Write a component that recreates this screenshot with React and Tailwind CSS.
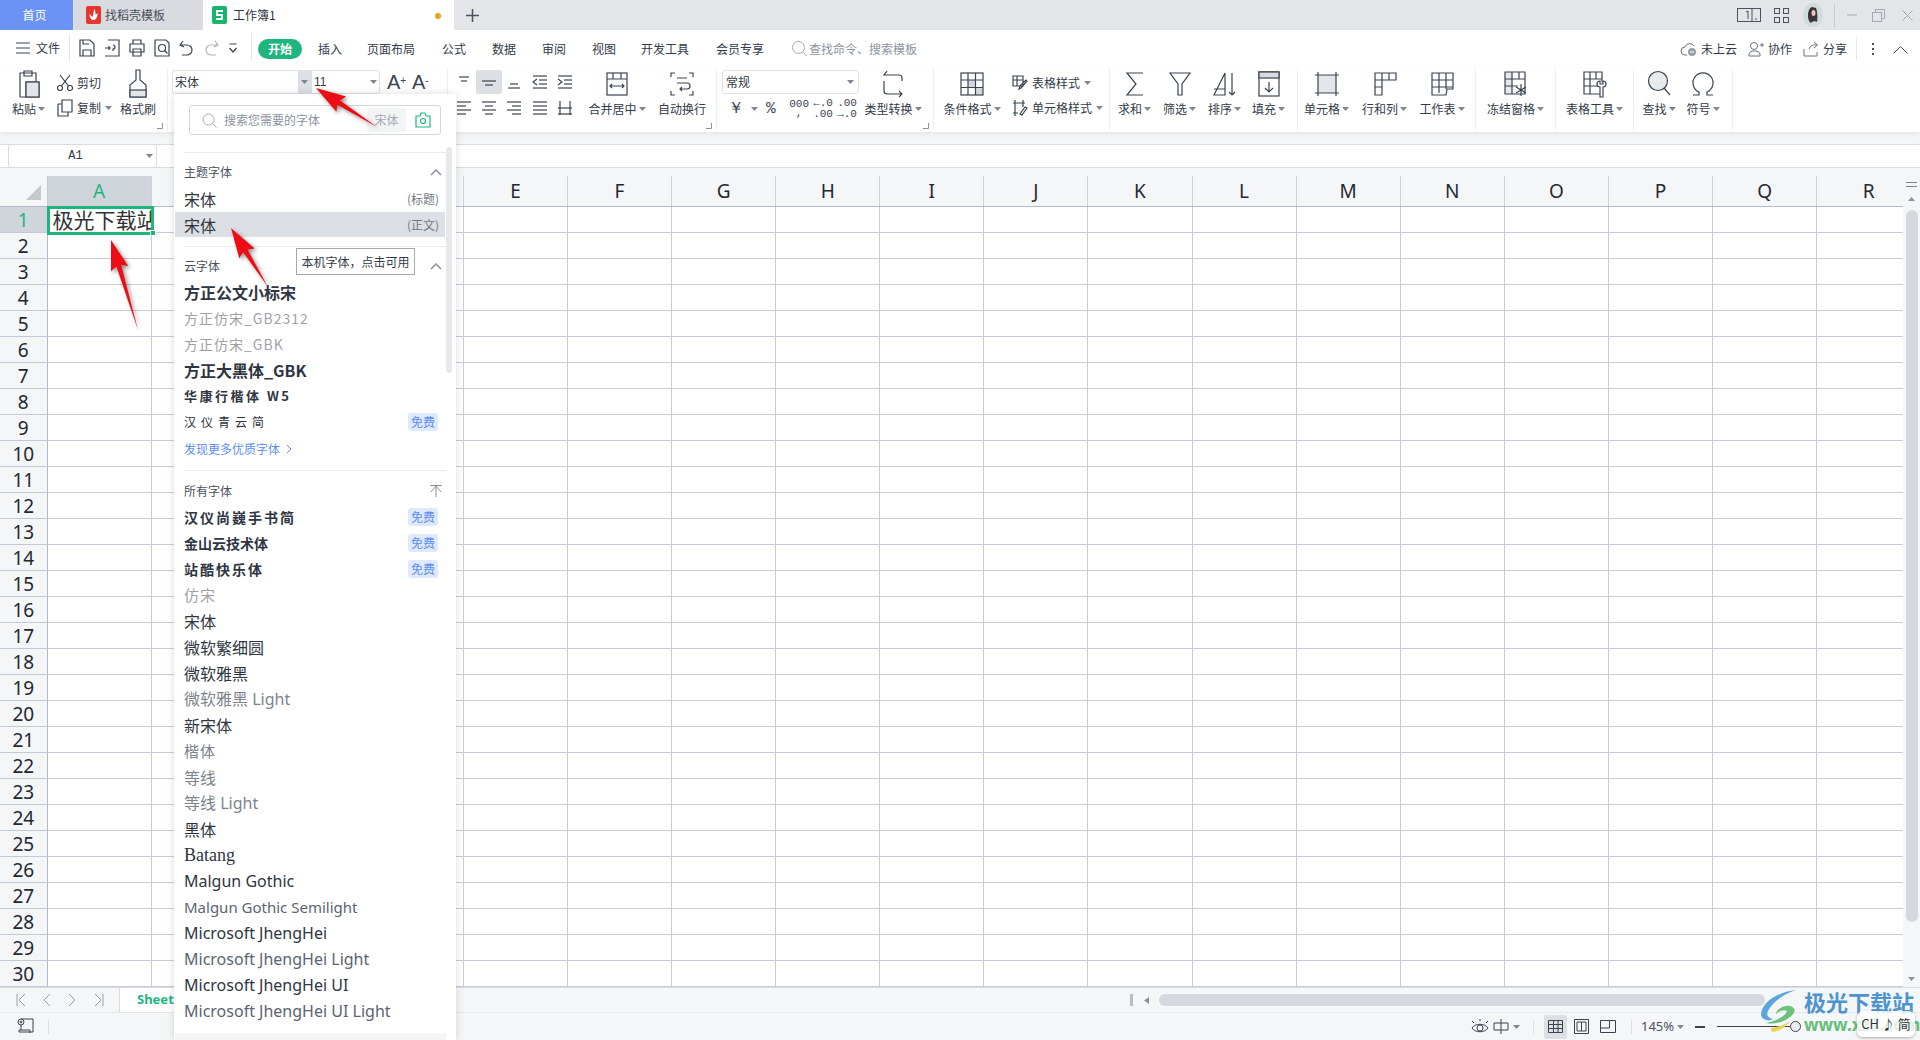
import React from 'react';

const FONT = '"Noto Sans CJK SC", "Noto Sans", sans-serif';
const COLS = 'ABCDEFGHIJKLMNOPQR'.split('');
const ROWS = Array.from({ length: 30 }, (_, i) => i + 1);
const INK = '#3b4351';

const Caret = ({ color = '#7f8692' }) => (
  <svg width="7" height="4" viewBox="0 0 7 4" className="shrink-0"><path d="M0 0h7L3.5 4z" fill={color} /></svg>
);

const Ic = ({ w = 24, h = 24, children, className = '' }) => (
  <svg width={w} height={h} viewBox={`0 0 ${w} ${h}`} fill="none" stroke={INK} strokeWidth="1.2" className={`shrink-0 ${className}`}>{children}</svg>
);

const Launcher = () => (
  <svg width="6" height="6" viewBox="0 0 6 6" className="absolute right-[4px] bottom-[3px]"><path d="M5.5 0v5.5H0" fill="none" stroke="#8b919c" /></svg>
);

const Sep = () => <div className="w-px h-[62px] mt-[3px] bg-[#eceef1] shrink-0" />;

const BigBtn = ({ w, label, caret, icon }) => (
  <div className="flex flex-col items-center shrink-0" style={{ width: w }}>
    <div className="h-[30px] mt-[4px] flex items-center justify-center">{icon}</div>
    <div className="mt-[1px] h-[18px] flex items-center gap-[2px] text-[12px] text-[#333a47] whitespace-nowrap">
      {label}{caret && <Caret />}
    </div>
  </div>
);

const SmallBtn = ({ icon, label, caret }) => (
  <div className="h-[25px] flex items-center gap-[4px] text-[12px] text-[#333a47] whitespace-nowrap">
    {icon}{label}{caret && <Caret />}
  </div>
);

const TableIcon = ({ extra }) => (
  <Ic w={30} h={30}>
    {extra}
    <rect x="4" y="4" width="22" height="22" />
    <path d="M4 11h22M4 18.500h22M11 4v22M18.500 4v22" />
  </Ic>
);

const AlignIcon = ({ lines }) => (
  <Ic w={18} h={16}>
    {lines.map((l, i) => <path key={i} d={l} />)}
  </Ic>
);

function TitleBar() {
  return (
    <div className="h-[30px] bg-[#e3e5e9] flex items-stretch shrink-0">
      <div className="w-[73px] bg-[#6b93f6] text-white text-[12px] flex items-center justify-center pr-[4px]">首页</div>
      <div className="w-[129px] ml-px bg-[#d9dbe0] flex items-center text-[12px] text-[#4a505c] pl-[12px] gap-[4px]">
        <svg width="15" height="18" viewBox="0 0 15 18"><rect width="15" height="18" rx="2" fill="#e8352e" /><path d="M3.500 8c0 4 2 6 4 6s4-2 4-7l-2 2c0-2 0-4-1-6-1 2-1 5-2 8-1-1-2-2-3-3z" fill="#fff" /></svg>
        找稻壳模板
      </div>
      <div className="w-[251px] bg-white flex items-center text-[12px] text-[#2d3340] pl-[9px] gap-[6px] relative">
        <svg width="15" height="18" viewBox="0 0 15 18"><rect width="15" height="18" rx="2" fill="#16b56b" /><path d="M11 5H5v4h5v4H4" fill="none" stroke="#fff" strokeWidth="1.8" /></svg>
        工作簿1
        <div className="absolute left-[232px] top-[13px] w-[6px] h-[6px] rounded-full bg-[#e9a21b]" />
      </div>
      <div className="w-[36px] flex items-center justify-center">
        <svg width="13" height="13" viewBox="0 0 13 13"><path d="M6.500 0v13M0 6.500h13" stroke="#4a5160" strokeWidth="1.500" /></svg>
      </div>
      <div className="flex-1" />
      <div className="flex items-center pr-[7px]">
        <svg width="24" height="14" viewBox="0 0 24 14" fill="none" stroke="#4a5160"><rect x=".5" y=".5" width="23" height="13" /><path d="M15 .5v13M9 4l2-1v8M18 11h2" /></svg>
        <svg width="15" height="15" viewBox="0 0 15 15" fill="none" stroke="#4a5160" className="ml-[13px]"><rect x=".5" y=".5" width="5" height="5" /><rect x="9.500" y=".5" width="5" height="5" /><rect x=".5" y="9.500" width="5" height="5" /><rect x="9.500" y="9.500" width="5" height="5" /></svg>
        <svg width="20" height="24" viewBox="0 0 20 24" className="ml-[14px]">
          <ellipse cx="10" cy="12" rx="10" ry="12" fill="#cfdcdc" />
          <path d="M9 4c-3 1-4 5-4 9 0 3 1 6 3 7 1-2 5-2 6-1 1-5 0-12-1-14z" fill="#3d3338" />
          <ellipse cx="10.500" cy="10" rx="2" ry="3" fill="#e9c8b8" />
        </svg>
        <div className="ml-[11px] w-px h-[24px] bg-[#c9ccd2]" />
        <svg width="10" height="2" className="ml-[12px]"><path d="M0 1h10" stroke="#a3a8b1" /></svg>
        <svg width="13" height="13" viewBox="0 0 13 13" fill="none" stroke="#a3a8b1" className="ml-[15px]"><rect x=".5" y="3.500" width="9" height="9" /><path d="M3.500 3.500v-3h9v9h-3" /></svg>
        <svg width="11" height="11" viewBox="0 0 11 11" stroke="#a3a8b1" className="ml-[17px]"><path d="M.5.5l10 10M10.500.5l-10 10" /></svg>
      </div>
    </div>
  );
}

function MenuBar() {
  const tabs = [['插入', 318], ['页面布局', 367], ['公式', 442], ['数据', 492], ['审阅', 542], ['视图', 592], ['开发工具', 641], ['会员专享', 716]];
  return (
    <div className="h-[35px] bg-white flex items-center shrink-0 text-[12px] text-[#333a47] relative">
      <svg width="14" height="12" viewBox="0 0 14 12" className="ml-[16px]"><path d="M0 1h14M0 6h14M0 11h14" stroke={INK} /></svg>
      <span className="ml-[6px]">文件</span>
      <div className="ml-[9px] w-px h-[28px] bg-[#e4e6ea]" />
      <div className="flex items-center gap-[9px] ml-[9px] w-[170px]">
        <Ic w={16} h={18}><path d="M1 1h10l4 4v12H1zM4 17v-6h8v6M4 1v4h6" /></Ic>
        <Ic w={16} h={18}><path d="M4 1h11v16H1M1 9h6M5 7v4M9 6a2 2 0 1 1 0 4v2" /></Ic>
        <Ic w={16} h={18}><path d="M4 5V1h8v4M1 5h14v8H1zM4 10h8v7H4z" /></Ic>
        <Ic w={16} h={18}><path d="M1 1h11l3 3v13H1z" /><circle cx="8" cy="9" r="3.500" /><path d="M10.500 11.500l3 3" /></Ic>
        <Ic w={16} h={18}><path d="M4 2L1 6l4 2M1 6h7a5 5 0 0 1 0 10H3" /></Ic>
        <Ic w={16} h={18} className="opacity-40"><path d="M11 2l3 4-4 2M14 6H7a5 5 0 0 0 0 10h5" /></Ic>
        <Ic w={8} h={18}><path d="M.5 5h7M.5 9l3.500 4 3.500-4" /></Ic>
      </div>
      <div className="absolute left-[251px] top-[3px] w-px h-[28px] bg-[#e4e6ea]" />
      <div className="absolute left-[258px] top-[9px] w-[44px] h-[20px] rounded-full bg-[#1fb67e] text-white font-bold flex items-center justify-center">开始</div>
      {tabs.map(([t, x]) => (
        <span key={t} className="absolute top-[10px]" style={{ left: x }}>{t}</span>
      ))}
      <div className="absolute left-[792px] top-[10px] flex items-center gap-[2px] text-[#8c93a1]">
        <svg width="15" height="16" viewBox="0 0 15 16" fill="none" stroke="#a4aab5"><circle cx="6.500" cy="6.500" r="6" /><path d="M11 11l3.500 4" /></svg>
        查找命令、搜索模板
      </div>
      <div className="absolute left-[1680px] top-[7px] flex items-center">
        <svg width="18" height="16" viewBox="0 0 18 16" fill="none" stroke="#6b7280"><path d="M7 14H5a4 4 0 0 1 0-8 5 5 0 0 1 9-1" /><circle cx="12" cy="11" r="4" fill="#9aa0aa" stroke="none" /><path d="M10 11h4" stroke="#fff" /></svg>
        <span className="ml-[3px]">未上云</span>
        <svg width="16" height="16" viewBox="0 0 16 16" fill="none" stroke="#6b7280" className="ml-[11px]"><circle cx="6" cy="5" r="3.500" /><path d="M1 15v-2a4 4 0 0 1 4-3h3a4 4 0 0 1 4 3v2zM12 4h4M14 2v4" /></svg>
        <span className="ml-[4px]">协作</span>
        <svg width="16" height="16" viewBox="0 0 16 16" fill="none" stroke="#6b7280" className="ml-[11px]"><path d="M1 8v7h13v-4M6 8a7 7 0 0 1 8-4M11 1l3.500 3L11 7" /></svg>
        <span className="ml-[4px]">分享</span>
        <div className="ml-[9px] w-px h-[24px] bg-[#e4e6ea]" />
        <div className="ml-[15px] flex flex-col gap-[3px]">
          <div className="w-[2px] h-[2px] bg-[#4a5160]" /><div className="w-[2px] h-[2px] bg-[#4a5160]" /><div className="w-[2px] h-[2px] bg-[#4a5160]" />
        </div>
        <svg width="15" height="9" viewBox="0 0 15 9" fill="none" stroke="#4a5160" className="ml-[19px]"><path d="M.5 8.500l7-7 7 7" /></svg>
      </div>
    </div>
  );
}

function Ribbon() {
  return (
    <div className="h-[67px] bg-white flex shrink-0 shadow-[0_2px_5px_rgba(0,0,0,0.07)] relative z-10">
      {/* clipboard */}
      <div className="w-[167px] flex relative shrink-0">
        <BigBtn w={57} label="粘贴" caret icon={<Ic w={24} h={30}><path d="M3 4h16v24H3zM7 2h8v5H7zM9 13h13v15H9z" /><rect x="9" y="13" width="13" height="15" fill="#e3e5e8" /></Ic>} />
        <div className="w-[58px] flex flex-col pt-[5px] shrink-0">
          <SmallBtn label="剪切" icon={<Ic w={16} h={18}><circle cx="3" cy="14" r="2.500" /><circle cx="13" cy="14" r="2.500" /><path d="M4.500 12L13 1M11.500 12L3 1" /></Ic>} />
          <SmallBtn label="复制" caret icon={<Ic w={16} h={18}><path d="M5 1h10v12H5z" /><path d="M1 5h4M1 5v12h10v-4" /></Ic>} />
        </div>
        <BigBtn w={46} label="格式刷" icon={<Ic w={20} h={30}><path d="M8 1h4v10l6 5v12H2V16l6-5z" /><rect x="2" y="21" width="16" height="7" fill="#e3e5e8" /></Ic>} />
        <Launcher />
      </div>
      <Sep />
      {/* font */}
      <div className="w-[279px] pl-[4px] pt-[5px] flex items-start shrink-0">
        <div className="w-[139px] h-[24px] border border-[#dfe1e5] border-r-0 rounded-l-[3px] flex items-center justify-between text-[12px] text-[#333a47] pl-[2px]">
          宋体
          <div className="w-[13px] h-full bg-[#dcdfe3] flex items-center justify-center"><Caret /></div>
        </div>
        <div className="w-[69px] h-[24px] border border-[#dfe1e5] rounded-r-[3px] flex items-center justify-between text-[12px] text-[#333a47] pl-[2px] pr-[2px]" style={{ fontFamily: '"Liberation Sans", sans-serif' }}>
          11<Caret />
        </div>
        <div className="ml-[7px] flex items-center gap-[5px] text-[20px] leading-[24px] text-[#3b4351]" style={{ fontFamily: '"Liberation Sans", sans-serif' }}>
          <span className="w-[18px] font-light">A<sup className="text-[10px]">+</sup></span>
          <span className="w-[18px] ml-[2px] font-light">A<sup className="text-[10px]">-</sup></span>
        </div>
      </div>
      <Sep />
      {/* alignment */}
      <div className="w-[268px] pl-[3px] flex relative shrink-0">
        <div className="w-[127px] grid grid-cols-5 grid-rows-[24px_24px] gap-y-[2px] pt-[5px] shrink-0">
          <div className="flex items-center justify-center"><AlignIcon lines={['M4 3h10', 'M6 7h6']} /></div>
          <div className="flex items-center justify-center bg-[#dcdfe3] rounded-[2px]"><AlignIcon lines={['M2 7h14', 'M5 11h8']} /></div>
          <div className="flex items-center justify-center"><AlignIcon lines={['M5 10h8', 'M3 14h12']} /></div>
          <div className="flex items-center justify-center"><AlignIcon lines={['M2 2h14', 'M8 6h8', 'M8 10h8', 'M2 14h14', 'M6 5L2 8l4 3']} /></div>
          <div className="flex items-center justify-center"><AlignIcon lines={['M2 2h14', 'M8 6h8', 'M8 10h8', 'M2 14h14', 'M2 5l4 3-4 3']} /></div>
          <div className="flex items-center justify-center"><AlignIcon lines={['M2 2h14', 'M2 6h9', 'M2 10h14', 'M2 14h9']} /></div>
          <div className="flex items-center justify-center"><AlignIcon lines={['M2 2h14', 'M5 6h8', 'M2 10h14', 'M5 14h8']} /></div>
          <div className="flex items-center justify-center"><AlignIcon lines={['M2 2h14', 'M7 6h9', 'M2 10h14', 'M7 14h9']} /></div>
          <div className="flex items-center justify-center"><AlignIcon lines={['M2 2h14', 'M2 6h14', 'M2 10h14', 'M2 14h14']} /></div>
          <div className="flex items-center justify-center"><AlignIcon lines={['M2 14h14', 'M2 8h14', 'M4 1v14', 'M14 1v14']} /></div>
        </div>
        <div className="w-[10px] shrink-0" />
        <BigBtn w={58} label="合并居中" caret icon={<Ic w={24} h={28}><rect x="2" y="3" width="20" height="22" /><path d="M2 9h20M8 3v6M16 3v6M5 16h14M7 14l-2 2 2 2M17 14l2 2-2 2" /></Ic>} />
        <div className="w-[7px] shrink-0" />
        <BigBtn w={58} label="自动换行" icon={<Ic w={26} h={26}><path d="M6 2H2v4M20 2h4v4M6 24H2v-4M20 24h4v-4M8 7h10M8 12h10a3 3 0 0 1 0 6h-7M13 16l-2 2 2 2" /></Ic>} />
        <Launcher />
      </div>
      <Sep />
      {/* number */}
      <div className="w-[216px] pl-[5px] flex relative shrink-0">
        <div className="w-[137px] pt-[5px] shrink-0">
          <div className="h-[24px] border border-[#dfe1e5] rounded-[3px] flex items-center justify-between text-[12px] text-[#333a47] pl-[3px] pr-[4px]">
            常规<Caret />
          </div>
          <div className="relative flex items-center h-[24px] mt-[3px] text-[#3b4351] whitespace-nowrap" style={{ fontFamily: '"Liberation Mono", monospace' }}>
            <span className="w-[24px] ml-[6px] text-[16px] flex items-center gap-[2px]">￥</span>
            <Caret />
            <span className="ml-[8px] w-[22px] text-[16px]">%</span>
            <span className="w-[25px] text-[11px] leading-[9px] text-center">000<br />,</span>
            <span className="w-[25px] text-[11px] leading-[11px] text-center">←.0<br />.00</span>
            <span className="w-[25px] text-[11px] leading-[11px] text-center">.00<br />→.0</span>
          </div>
        </div>
        <div className="w-[3px] shrink-0" />
        <BigBtn w={62} label="类型转换" caret icon={<Ic w={24} h={30}><path d="M6 2l-3 4h15a3 3 0 0 1 3 3v3M3 12v10a3 3 0 0 0 3 3h15M18 22l3 3-3 3" /></Ic>} />
        <Launcher />
      </div>
      <Sep />
      {/* styles */}
      <div className="w-[175px] pl-[8px] flex shrink-0">
        <BigBtn w={60} label="条件格式" caret icon={<TableIcon extra={<><rect x="11" y="11" width="7.500" height="7.500" fill="#d5d8dd" stroke="none" /><rect x="18.500" y="18.500" width="7.500" height="7.500" fill="#d5d8dd" stroke="none" /></>} />} />
        <div className="pl-[10px] pt-[5px] flex flex-col">
          <SmallBtn label="表格样式" caret icon={<Ic w={16} h={18}><path d="M1 2h10v10H1zM1 6h10M5 2v10M8 12l6-6 1 1-6 7-2 1z" /></Ic>} />
          <SmallBtn label="单元格样式" caret icon={<Ic w={16} h={18}><path d="M3 1v16M1 4h12M11 1v7M1 14h5M8 15l5-7 2 1-5 7z" /></Ic>} />
        </div>
      </div>
      <Sep />
      {/* editing */}
      <div className="w-[187px] pl-[2px] flex shrink-0">
        <BigBtn w={45} label="求和" caret icon={<Ic w={20} h={28}><path d="M18 3H2l9 11-9 11h16" /></Ic>} />
        <BigBtn w={45} label="筛选" caret icon={<Ic w={24} h={28}><path d="M2 3h20l-8 11v11h-4V14z" /></Ic>} />
        <BigBtn w={45} label="排序" caret icon={<Ic w={26} h={28}><path d="M2 25L13 3v22zM2 19h11M20 3v22M17 22l3 3 3-3" /></Ic>} />
        <BigBtn w={43} label="填充" caret icon={<Ic w={22} h={28}><rect x="1" y="2" width="20" height="24" /><rect x="1" y="2" width="20" height="6" fill="#d8dbdf" /><path d="M11 12v10M7 18l4 4 4-4" /></Ic>} />
      </div>
      <Sep />
      {/* cells */}
      <div className="w-[177px] flex shrink-0">
        <BigBtn w={57} label="单元格" caret icon={<Ic w={26} h={26}><rect x="4" y="4" width="18" height="18" fill="#e3e5e8" stroke="none" /><path d="M4 1v24M22 1v24M1 4h24M1 22h24" /></Ic>} />
        <BigBtn w={59} label="行和列" caret icon={<Ic w={24} h={26}><path d="M2 2h21v7H9v15H2zM2 9h7M9 2v7M16 2v7M2 16h7" /></Ic>} />
        <BigBtn w={56} label="工作表" caret icon={<Ic w={24} h={26}><path d="M2 2h21v16h-6l-1 6H2zM2 9h21M2 16h21M9 2v20M16 2v16" /></Ic>} />
      </div>
      <Sep />
      <div className="w-[79px] flex justify-center shrink-0">
        <BigBtn w={79} label="冻结窗格" caret icon={<Ic w={26} h={28}><rect x="2" y="2" width="7" height="22" fill="#d8dbdf" fillOpacity=".6" stroke="none" /><path d="M2 2h20v22H2zM2 9h20M2 16h13M9 2v22M16 2v7" /><path d="M18 14v12M13 17l10 6M23 17l-10 6" /></Ic>} />
      </div>
      <Sep />
      <div className="w-[77px] flex justify-center shrink-0">
        <BigBtn w={77} label="表格工具" caret icon={<Ic w={24} h={28}><path d="M19 12V2H1v22h16M1 9h18M1 16h14M7 2v22M13 2v7" /><path d="M17 11a3 3 0 0 0 0 6v10h3V17a3 3 0 0 0 0-6v3h-3z" fill="#fff" /></Ic>} />
      </div>
      <Sep />
      <div className="w-[98px] pl-[3px] flex shrink-0">
        <BigBtn w={44} label="查找" caret icon={<Ic w={24} h={28}><circle cx="11" cy="11" r="9.500" fill="#e8eaed" /><path d="M17 18l6 7" /></Ic>} />
        <BigBtn w={44} label="符号" caret icon={<Ic w={24} h={28}><path d="M2 25h6v-3a10 10 0 1 1 8 0v3h6" /></Ic>} />
      </div>
      <Sep />
    </div>
  );
}

function FormulaBar() {
  return (
    <div className="shrink-0 pt-[12px] pb-[8px] bg-[#f5f6f8]">
      <div className="h-[24px] flex bg-white border-y border-[#d9dbe0] pl-[8px] pr-[2px]">
        <div className="w-[149px] -my-px border border-[#d9dbe0] rounded-[3px] flex items-center bg-white text-[12px] text-[#333a47] pr-[3px]" style={{ fontFamily: '"Liberation Mono", monospace' }}>
          <span className="flex-1 text-center pr-[4px]">A1</span><Caret />
        </div>
        <div className="flex-1" />
      </div>
    </div>
  );
}

function Sheet() {
  const num = { fontFamily: '"Noto Sans", sans-serif' };
  return (
    <div className="flex shrink-0 h-[811px]">
      <div className="w-[1903px] overflow-hidden shrink-0">
        <div className="flex h-[31px] bg-[#f5f6f8] border-b border-[#b4bace]">
          <div className="w-[47.500px] shrink-0 border-r border-[#c4c8d8] flex items-end justify-end pr-[6px] pb-[6px]">
            <svg width="15" height="15" viewBox="0 0 15 15"><path d="M15 0v15H0z" fill="#c6c8cd" /></svg>
          </div>
          {COLS.map((c, i) => (
            <div key={c} style={num} className={`w-[104.100px] shrink-0 border-r border-[#cdd1dd] flex items-center justify-center text-[19px] ${i === 0 ? 'bg-[#d0d4db] text-[#1fb67e]' : 'text-[#222831]'}`}>{c}</div>
          ))}
        </div>
        {ROWS.map((r) => (
          <div key={r} className="flex h-[26px]">
            <div style={num} className={`w-[47.500px] shrink-0 border-r border-b border-r-[#b4bace] border-b-[#c4c8d8] flex items-center justify-center pt-[1px] text-[19px] ${r === 1 ? 'bg-[#d0d4db] text-[#1fb67e]' : 'bg-[#f5f6f8] text-[#222831]'}`}>{r}</div>
            {COLS.map((c, i) => (
              <div key={c} className="w-[104.100px] shrink-0 border-r border-b border-[#c8ccda] relative bg-white">
                {r === 1 && i === 0 && (
                  <div className="absolute -left-[1px] -top-[1px] w-[107px] h-[29px] border-[3px] border-[#1fb67e] z-10">
                    <div className="h-full overflow-hidden text-[21px] leading-[25px] pl-[3px] whitespace-nowrap text-[#333]" style={{ fontFamily: '"Liberation Serif", "Noto Sans CJK SC", serif' }}>极光下载站</div>
                    <div className="absolute -right-[5px] -bottom-[4px] w-[6px] h-[6px] bg-[#1fb67e] border border-white" />
                  </div>
                )}
              </div>
            ))}
          </div>
        ))}
      </div>
      <div className="w-[17px] bg-[#f5f6f8] relative shrink-0 flex flex-col items-center">
        <div className="mt-[6px] w-[11px] h-[5px] border-y border-[#7f8692]" />
        <svg width="7" height="4" className="mt-[10px]"><path d="M0 4h7L3.500 0z" fill="#8b919c" /></svg>
        <div className="mt-[9px] w-[12px] h-[712px] rounded-[6px] bg-[#d5d8de]" />
        <div className="flex-1" />
        <div className="mb-[6px]"><Caret color="#8b919c" /></div>
      </div>
    </div>
  );
}

function SheetTabs() {
  return (
    <div className="h-[25px] shrink-0 bg-[#f5f6f8] flex border-t border-[#d9dbe0]">
      <div className="w-[120px] flex items-center border-r border-[#d9dbe0] pl-[16px] gap-[16px] shrink-0">
        {['M1 1v12M9 1L3 7l6 6', 'M8 1L2 7l6 6', 'M1 1l6 6-6 6', 'M1 1l6 6-6 6M9 1v12'].map((d) => (
          <svg key={d} width="10" height="14" viewBox="0 0 10 14" fill="none" stroke="#9ba1ac"><path d={d} /></svg>
        ))}
      </div>
      <div className="w-[120px] bg-white pl-[17px] flex items-center text-[13px] font-bold text-[#1fb67e] shrink-0" style={{ fontFamily: '"Noto Sans", sans-serif' }}>Sheet1</div>
      <div className="flex-1" />
      <div className="w-[770px] flex items-center shrink-0">
        <div className="w-[3px] h-[12px] bg-[#b9bdc6] mr-[11px]" />
        <svg width="5" height="7"><path d="M5 0v7L0 3.500z" fill="#8b919c" /></svg>
        <div className="ml-[10px] flex-1 h-[12px] rounded-[6px] bg-[#d5d8de] mr-[130px]" />
        <div className="w-[5px]" />
      </div>
      <div className="w-[20px]" />
    </div>
  );
}

function StatusBar() {
  return (
    <div className="flex-1 bg-[#f5f6f8] flex items-center border-t border-[#e6e8ec] relative">
      <svg width="18" height="17" viewBox="0 0 18 17" fill="none" stroke={INK} className="ml-[16px]"><circle cx="5" cy="4" r="3" /><circle cx="5" cy="4" r="1" /><path d="M5 1h12v13H3v-2h11v3M5 7v5" /></svg>
      <div className="ml-[14px] w-px h-[14px] bg-[#dfe1e5]" />
      <div className="flex-1" />
      <div className="flex items-center w-[450px] pl-[1px] shrink-0">
        <svg width="18" height="15" viewBox="0 0 18 15" fill="none" stroke={INK}><path d="M1 9c3-5 13-5 16 0-3 5-13 5-16 0z" /><circle cx="9" cy="9" r="3" /><path d="M3 4L1 2M9 2V0M15 4l2-2" /></svg>
        <svg width="16" height="15" viewBox="0 0 16 15" fill="none" stroke={INK} className="ml-[4px]"><path d="M1 4h14v7H1zM8 0v15" /></svg>
        <span className="ml-[4px]"><Caret /></span>
        <div className="ml-[13px] w-px h-[14px] bg-[#dfe1e5]" />
        <div className="ml-[10px] w-[23px] h-[24px] rounded-[2px] bg-[#dcdfe3] flex items-center justify-center">
          <svg width="15" height="13" viewBox="0 0 15 13" fill="none" stroke={INK}><path d="M.5.5h14v12H.5zM.5 4.500h14M.5 8.500h14M5.500.5v12M10 .5v12" /></svg>
        </div>
        <svg width="15" height="15" viewBox="0 0 15 15" fill="none" stroke={INK} className="ml-[7px]"><path d="M.5.5h14v14H.5zM3 3h9v9H3zM7.500 3v9" /></svg>
        <svg width="16" height="13" viewBox="0 0 16 13" fill="none" stroke={INK} className="ml-[11px]"><path d="M.5.5h15v12H.5zM.5 8h9V.5" /></svg>
        <div className="ml-[15px] w-px h-[14px] bg-[#dfe1e5]" />
        <span className="ml-[9px] w-[33px] text-[13px] text-[#4a5160]" style={{ fontFamily: '"Noto Sans", sans-serif' }}>145%</span>
        <span className="ml-[3px]"><Caret /></span>
        <div className="ml-[11px] w-[10px] h-[2px] bg-[#3b4351]" />
        <div className="ml-[12px] w-[73px] h-px bg-[#3b4351]" />
        <div className="w-[11px] h-[11px] rounded-full border border-[#3b4351] bg-[#eceef0]" />
      </div>
    </div>
  );
}

const Free = () => (
  <span className="w-[30px] h-[18px] rounded-[3px] bg-[#dfe9fd] text-[#5b8ef0] text-[12px] tracking-normal font-normal flex items-center justify-center shrink-0">免费</span>
);

const FontRow = ({ name, cls = '', free, right, style }) => (
  <div className={`h-[26px] pl-[10px] pr-[18px] flex items-center justify-between text-[16px] whitespace-nowrap text-[#2f3541] ${cls}`} style={style}>
    <span>{name}</span>
    {free && <Free />}
    {right && <span className="text-[12px] text-[#72777f] -mr-[1px]">{right}</span>}
  </div>
);

const SectionHead = ({ title, icon }) => (
  <div className="h-[26px] pl-[10px] pr-[14px] flex items-center justify-between text-[12px] text-[#4a505c]">
    {title}{icon}
  </div>
);

const Chevron = () => (
  <svg width="12" height="7" viewBox="0 0 12 7" fill="none" stroke="#8b919c" strokeWidth="1.500"><path d="M1 6l5-5 5 5" /></svg>
);

function FontDropdown() {
  const latin = { fontFamily: '"Noto Sans", "Noto Sans CJK SC", sans-serif' };
  return (
    <div className="absolute left-[174px] top-[94px] w-[282px] h-[946px] bg-white shadow-[0_0_8px_rgba(0,0,0,0.14)] overflow-hidden z-20">
      <div className="mx-[15px] mt-[11px] h-[30px] border border-[#d3d6dc] rounded-[3px] flex items-center pl-[12px] pr-[8px] text-[12px] text-[#8c93a1] whitespace-nowrap">
        <svg width="15" height="15" viewBox="0 0 15 15" fill="none" stroke="#a4aab5" className="shrink-0"><circle cx="6.500" cy="6.500" r="5.500" /><path d="M10.500 10.500l4 4" /></svg>
        <span className="ml-[7px] shrink-0">搜索您需要的字体</span>
        <span className="ml-[47px] w-[39px] h-[24px] rounded-[2px] bg-[#f2f3f5] flex items-center justify-center text-[#a4aab5] shrink-0">宋体</span>
        <svg width="16" height="16" viewBox="0 0 16 16" fill="none" stroke="#1fb67e" strokeWidth="1.200" className="ml-[9px] shrink-0"><path d="M1 4h4l1-3h4l1 3h4v11H1z" /><circle cx="8" cy="9" r="2.500" /></svg>
      </div>
      <div className="mx-[10px] mt-[17px] h-px bg-[#e8eaed]" />
      <div className="mt-[6px]">
        <SectionHead title="主题字体" icon={<Chevron />} />
        <div className="h-[1px]" />
        <FontRow name="宋体" right="(标题)" />
        <div className="mx-px">
          <FontRow name="宋体" right="(正文)" cls="bg-[#dcdfe3] mr-[10px] !pl-[9px] !pr-[7px] !h-[25px]" />
        </div>
        <div className="mx-[10px] mt-[9px] mb-[6px] h-px bg-[#e8eaed]" />
        <SectionHead title="云字体" icon={<Chevron />} />
        <FontRow name="方正公文小标宋" cls="font-bold" />
        <FontRow name="方正仿宋_GB2312" cls="!text-[14px] !text-[#9ea2a8] tracking-[1px]" />
        <FontRow name="方正仿宋_GBK" cls="!text-[14px] !text-[#9ea2a8] tracking-[1px]" />
        <FontRow name="方正大黑体_GBK" cls="font-bold" />
        <FontRow name="华康行楷体 W5" cls="!text-[13px] font-bold tracking-[2.500px]" />
        <FontRow name="汉仪青云简" free cls="!text-[12px] tracking-[5px]" />
        <div className="h-[26px] mt-[1px] pl-[10px] flex items-center text-[12px] text-[#5b8ef0]">
          发现更多优质字体
          <svg width="6" height="10" viewBox="0 0 6 10" fill="none" stroke="#5b8ef0" className="ml-[6px]"><path d="M1 1l4 4-4 4" /></svg>
        </div>
        <div className="mx-[10px] mt-[8px] mb-[7px] h-px bg-[#e8eaed]" />
        <SectionHead title="所有字体" icon={<svg width="12" height="12" viewBox="0 0 12 12" fill="none" stroke="#8b919c"><path d="M0 .5h12M6 1v11M1 7l5-6 5 6" /></svg>} />
        <FontRow name="汉仪尚巍手书简" free cls="!text-[14px] font-bold tracking-[2px]" />
        <FontRow name="金山云技术体" free cls="!text-[14px] font-bold" />
        <FontRow name="站酷快乐体" free cls="!text-[14px] font-bold tracking-[2px]" />
        <FontRow name="仿宋" cls="!text-[15px] !text-[#9ea2a8] tracking-[1px]" />
        <FontRow name="宋体" />
        <FontRow name="微软繁细圆" />
        <FontRow name="微软雅黑" />
        <FontRow name="微软雅黑 Light" cls="!text-[#7d838d]" style={latin} />
        <FontRow name="新宋体" />
        <FontRow name="楷体" cls="!text-[15px] !text-[#7d838d] tracking-[1px]" />
        <FontRow name="等线" cls="!text-[#7d838d]" />
        <FontRow name="等线 Light" cls="!text-[#7d838d]" style={latin} />
        <FontRow name="黑体" />
        <FontRow name="Batang" cls="!text-[18px]" style={{ fontFamily: '"Liberation Serif", serif' }} />
        <FontRow name="Malgun Gothic" style={latin} />
        <FontRow name="Malgun Gothic Semilight" cls="!text-[15px] !text-[#5c6470]" style={latin} />
        <FontRow name="Microsoft JhengHei" style={latin} />
        <FontRow name="Microsoft JhengHei Light" cls="!text-[#5c6470]" style={latin} />
        <FontRow name="Microsoft JhengHei UI" style={latin} />
        <FontRow name="Microsoft JhengHei UI Light" cls="!text-[#5c6470]" style={latin} />
      </div>
      <div className="absolute left-[272px] top-[53px] w-[6px] h-[226px] rounded-[3px] bg-[#e6e8eb]" />
      <div className="absolute left-[1px] right-[10px] bottom-0 h-[7px] bg-[#f5f5f5]" />
    </div>
  );
}

const Arrow = ({ x1, y1, x2, y2 }) => {
  // tail (x1,y1) to tip (x2,y2)
  const len = Math.hypot(x2 - x1, y2 - y1);
  const ux = (x2 - x1) / len, uy = (y2 - y1) / len;
  const nx = -uy, ny = ux;
  const head = 27;
  const bx = x2 - ux * head, by = y2 - uy * head;
  const p = (x, y) => `${x.toFixed(1)},${y.toFixed(1)}`;
  const pts = [
    p(x1, y1),
    p(bx + nx * 2.5, by + ny * 2.5),
    p(bx - ux * 3 + nx * 9, by - uy * 3 + ny * 9),
    p(x2, y2),
    p(bx - ux * 3 - nx * 9, by - uy * 3 - ny * 9),
    p(bx - nx * 2.5, by - ny * 2.5),
  ].join(' ');
  return <polygon points={pts} fill="#ee0d14" />;
};

function Overlays() {
  return (
    <>
      <svg width="1920" height="1040" className="absolute left-0 top-0 z-40 pointer-events-none drop-shadow-[2px_2px_2px_rgba(0,0,0,0.45)]">
        <Arrow x1={377} y1={127} x2={316} y2={88} />
        <Arrow x1={268} y1={287} x2={231} y2={228} />
        <Arrow x1={138} y1={330} x2={111} y2={240} />
      </svg>
      <div className="absolute left-[296px] top-[248px] w-[119px] h-[27px] bg-white border border-[#a5a8ad] z-30 flex items-center justify-center text-[12px] text-[#333a47] whitespace-nowrap">本机字体，点击可用</div>
      {/* watermark */}
      <div className="absolute left-[1758px] top-[988px] z-30 flex pointer-events-none">
        <svg width="46" height="50" viewBox="0 0 46 50" fill="none">
          <path d="M38 2C20 4 4 14 3 26c0 6 8 8 12 5-5-1-7-4-5-8C14 14 26 6 38 2z" fill="#5aa6dc" />
          <path d="M8 35c10 2 22-2 28-10 2-4-2-8-8-7-6 1-10 5-10 8 3-3 8-5 11-3-1 4-8 9-21 12z" fill="#6cc27a" />
          <path d="M14 44c8-1 14-5 18-11-4 3-10 6-19 7z" fill="#e8d35a" />
        </svg>
        <div>
          <div className="text-[22px] leading-[26px] font-bold text-[#4d94cf] whitespace-nowrap">极光下载站</div>
          <div className="mt-[1px] text-[17px] leading-[20px] font-bold text-[#66bd7c] whitespace-nowrap" style={{ fontFamily: '"Noto Sans", sans-serif' }}>www.xz7.com</div>
        </div>
      </div>
      <div className="absolute left-[1857px] top-[1011px] w-[58px] h-[26px] rounded-[6px] bg-white/80 shadow-[0_1px_3px_rgba(0,0,0,0.3)] z-30 flex items-center justify-center text-[13px] text-[#333] whitespace-nowrap">CH ♪ 简</div>
    </>
  );
}

export default function App() {
  return (
    <div className="w-[1920px] h-[1040px] relative overflow-hidden flex flex-col bg-white" style={{ fontFamily: FONT }}>
      <TitleBar />
      <MenuBar />
      <Ribbon />
      <FormulaBar />
      <Sheet />
      <SheetTabs />
      <StatusBar />
      <FontDropdown />
      <Overlays />
    </div>
  );
}
